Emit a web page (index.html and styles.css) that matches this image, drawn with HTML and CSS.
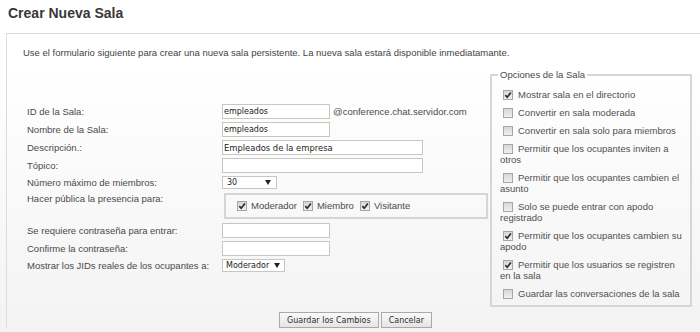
FILE: index.html
```html
<!DOCTYPE html>
<html lang="es">
<head>
<meta charset="utf-8">
<title>Crear Nueva Sala</title>
<link rel="stylesheet" href="styles.css">
</head>
<body>
<h1 class="title">Crear Nueva Sala</h1>
<div class="panel">
  <p class="intro">Use el formulario siguiente para crear una nueva sala persistente. La nueva sala estará disponible inmediatamante.</p>
  <div class="main">
    <div class="form-grid">
      <label class="lbl">ID de la Sala:</label>
      <div class="field"><input class="txt w-sm" type="text" value="empleados"><span class="suffix">@conference.chat.servidor.com</span></div>

      <label class="lbl">Nombre de la Sala:</label>
      <div class="field"><input class="txt w-sm" type="text" value="empleados"></div>

      <label class="lbl">Descripción.:</label>
      <div class="field"><input class="txt w-lg big" type="text" value="Empleados de la empresa"></div>

      <label class="lbl">Tópico:</label>
      <div class="field"><input class="txt w-lg" type="text" value=""></div>

      <label class="lbl">Número máximo de miembros:</label>
      <div class="field"><div class="select sel-num"><span>30</span><span class="arrow"></span></div></div>

      <label class="lbl top">Hacer pública la presencia para:</label>
      <div class="field">
        <div class="presence">
          <span class="chk"><span class="cb"><svg width="8" height="8" viewBox="0 0 8 8"><path d="M1.3 4.1 L3.2 6.2 L6.9 1.4" fill="none" stroke="#2b2b2b" stroke-width="1.6"/></svg></span>Moderador</span>
          <span class="chk"><span class="cb"><svg width="8" height="8" viewBox="0 0 8 8"><path d="M1.3 4.1 L3.2 6.2 L6.9 1.4" fill="none" stroke="#2b2b2b" stroke-width="1.6"/></svg></span>Miembro</span>
          <span class="chk"><span class="cb"><svg width="8" height="8" viewBox="0 0 8 8"><path d="M1.3 4.1 L3.2 6.2 L6.9 1.4" fill="none" stroke="#2b2b2b" stroke-width="1.6"/></svg></span>Visitante</span>
        </div>
      </div>

      <label class="lbl">Se requiere contraseña para entrar:</label>
      <div class="field"><input class="txt w-sm" type="password" value=""></div>

      <label class="lbl">Confirme la contraseña:</label>
      <div class="field"><input class="txt w-sm" type="password" value=""></div>

      <label class="lbl">Mostrar los JIDs reales de los ocupantes a:</label>
      <div class="field"><div class="select sel-role"><span>Moderador</span><span class="arrow"></span></div></div>
    </div>

    <fieldset class="options">
      <legend>Opciones de la Sala</legend>
      <div class="opt"><span class="cb"><svg width="8" height="8" viewBox="0 0 8 8"><path d="M1.3 4.1 L3.2 6.2 L6.9 1.4" fill="none" stroke="#2b2b2b" stroke-width="1.6"/></svg></span>Mostrar sala en el directorio</div>
      <div class="opt"><span class="cb"></span>Convertir en sala moderada</div>
      <div class="opt"><span class="cb"></span>Convertir en sala solo para miembros</div>
      <div class="opt"><span class="cb"></span>Permitir que los ocupantes inviten a otros</div>
      <div class="opt"><span class="cb"></span>Permitir que los ocupantes cambien el asunto</div>
      <div class="opt"><span class="cb"></span>Solo se puede entrar con apodo registrado</div>
      <div class="opt"><span class="cb"><svg width="8" height="8" viewBox="0 0 8 8"><path d="M1.3 4.1 L3.2 6.2 L6.9 1.4" fill="none" stroke="#2b2b2b" stroke-width="1.6"/></svg></span>Permitir que los ocupantes cambien su apodo</div>
      <div class="opt"><span class="cb"><svg width="8" height="8" viewBox="0 0 8 8"><path d="M1.3 4.1 L3.2 6.2 L6.9 1.4" fill="none" stroke="#2b2b2b" stroke-width="1.6"/></svg></span>Permitir que los usuarios se registren en la sala</div>
      <div class="opt"><span class="cb"></span>Guardar las conversaciones de la sala</div>
    </fieldset>
  </div>
  <div class="actions">
    <button class="btn" type="button">Guardar los Cambios</button>
    <button class="btn" type="button">Cancelar</button>
  </div>
</div>
</body>
</html>
```

FILE: styles.css
```css
html, body {
  margin: 0;
  padding: 0;
}
body {
  width: 700px;
  height: 332px;
  overflow: hidden;
  font-family: "Liberation Sans", Arial, sans-serif;
  font-size: 9.5px;
  color: #4a4a4a;
  background: linear-gradient(#ffffff 0, #ffffff 70px, #f3f3f3 332px);
}
.title {
  margin: 0 0 10px;
  padding: 3px 0 0 8px;
  font-size: 14px;
  line-height: 20px;
  font-weight: bold;
  color: #383838;
}
.panel {
  margin: 0 -4px 0 6px;
  border-top: 1px solid #dcdcdc;
  border-left: 1px solid #dcdcdc;
  padding: 13px 0 0 0;
}
.intro {
  margin: 0 0 10px 16px;
  line-height: 12px;
  color: #444;
}
.main {
  display: flex;
  align-items: center;
}
.form-grid {
  width: 463px;
  margin-left: 20px;
  display: grid;
  grid-template-columns: 195px 1fr;
  row-gap: 3px;
  align-items: center;
}
.lbl {
  line-height: 12px;
  white-space: nowrap;
}
.lbl.top {
  align-self: start;
  margin-top: 1px;
}
.field {
  display: flex;
  align-items: center;
}
.txt {
  box-sizing: border-box;
  height: 15px;
  margin: 0;
  padding: 0 1px;
  border: 1px solid #cac6be;
  background: #fff;
  font-family: "DejaVu Sans", sans-serif;
  font-size: 8px;
  color: #222;
  outline: none;
}
.txt.big {
  font-size: 8.4px;
}
.w-sm { width: 108px; }
.w-lg { width: 201px; }
.suffix {
  margin-left: 3px;
  line-height: 12px;
}
.select {
  box-sizing: border-box;
  height: 13px;
  border: 1px solid #cac6be;
  background: #fff;
  display: flex;
  align-items: center;
  justify-content: space-between;
  font-family: "DejaVu Sans", sans-serif;
  font-size: 8px;
  color: #222;
}
.sel-num {
  width: 55px;
  padding: 0 5px 0 4px;
}
.sel-role {
  width: 63px;
  padding: 0 4px 0 3px;
}
.arrow {
  width: 0;
  height: 0;
  border-left: 3px solid transparent;
  border-right: 3px solid transparent;
  border-top: 5px solid #222;
}
.presence {
  box-sizing: border-box;
  width: 264px;
  height: 26px;
  margin: 1px 0 1px 2px;
  border: 2px solid #d5d5d5;
  padding-left: 8px;
  display: flex;
  align-items: center;
}
.chk {
  display: inline-flex;
  align-items: center;
  line-height: 12px;
}
.chk + .chk {
  margin-left: 3px;
}
.chk .cb {
  margin: 0 4px 0 3px;
}
.cb {
  display: inline-block;
  box-sizing: border-box;
  width: 10px;
  height: 10px;
  border: 1px solid #a6a6a6;
  background: linear-gradient(#d6d6d6, #f0f0f0);
}
.cb svg {
  display: block;
}
.options {
  box-sizing: border-box;
  width: 202px;
  min-width: 0;
  margin: 0;
  padding: 1px 6px 6px 8px;
  border: 2px solid #d6d6d6;
}
.options legend {
  padding: 0 2px;
  margin-left: -2px;
  line-height: 12px;
  color: #4a4a4a;
}
.opt {
  padding-top: 7px;
  line-height: 11px;
  color: #505050;
}
.opt .cb {
  margin: 0 5px 0 3px;
  vertical-align: -2px;
}
.actions {
  margin-top: 5px;
  display: flex;
  justify-content: center;
  gap: 2px;
}
.btn {
  height: 16px;
  margin: 0;
  padding: 0 7px;
  border: 1px solid #a9a9a9;
  border-radius: 0;
  background: linear-gradient(#fafafa, #e4e4e4);
  font-family: "DejaVu Sans", sans-serif;
  font-size: 8px;
  color: #2e2e2e;
}
```
